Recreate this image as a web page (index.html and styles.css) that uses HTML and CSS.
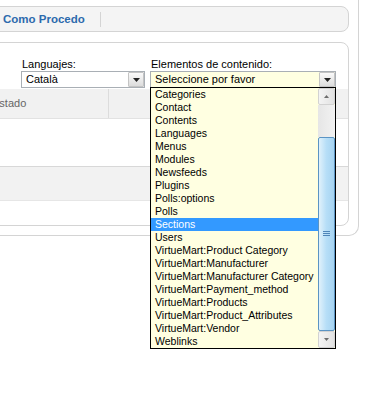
FILE: index.html
```html
<!DOCTYPE html>
<html lang="es">
<head>
  <meta charset="UTF-8" />
  <meta name="viewport" content="width=device-width, initial-scale=1.0" />
  <title>Como Procedo</title>
  <link rel="stylesheet" href="styles.css">
</head>
<body>
  <div class="page">
    <div class="tabs">
      <a class="tab" href="#">Como Procedo</a>
      <span class="tab-sep"></span>
    </div>

    <div class="panel">
      <div class="filters">
        <div class="field field-lang">
          <label>Languajes:</label>
          <div class="combo">
            <span class="combo-value">Català</span>
            <span class="combo-btn">
              <svg width="7" height="4" viewBox="0 0 7 4"><polygon points="0,0 7,0 3.5,4" fill="#222"/></svg>
            </span>
          </div>
        </div>

        <div class="field field-elem">
          <label>Elementos de contenido:</label>
          <div class="combo combo-open">
            <span class="combo-value">Seleccione por favor</span>
            <span class="combo-btn">
              <svg width="7" height="4" viewBox="0 0 7 4"><polygon points="0,0 7,0 3.5,4" fill="#222"/></svg>
            </span>

            <div class="listbox">
              <ul class="options">
                <li>Categories</li>
                <li>Contact</li>
                <li>Contents</li>
                <li>Languages</li>
                <li>Menus</li>
                <li>Modules</li>
                <li>Newsfeeds</li>
                <li>Plugins</li>
                <li>Polls:options</li>
                <li>Polls</li>
                <li class="selected">Sections</li>
                <li>Users</li>
                <li>VirtueMart:Product Category</li>
                <li>VirtueMart:Manufacturer</li>
                <li>VirtueMart:Manufacturer Category</li>
                <li>VirtueMart:Payment_method</li>
                <li>VirtueMart:Products</li>
                <li>VirtueMart:Product_Attributes</li>
                <li>VirtueMart:Vendor</li>
                <li>Weblinks</li>
              </ul>
              <div class="scrollbar">
                <div class="sb-btn">
                  <svg width="5" height="3" viewBox="0 0 5 3"><polygon points="0,3 5,3 2.5,0" fill="#6d6d6d"/></svg>
                </div>
                <div class="sb-track"></div>
                <div class="sb-thumb">
                  <svg width="7" height="6" viewBox="0 0 7 6"><path d="M0 0.5H7M0 2.5H7M0 4.5H7" stroke="#4f85b8" stroke-width="1"/></svg>
                </div>
                <div class="sb-btn">
                  <svg width="5" height="3" viewBox="0 0 5 3"><polygon points="0,0 5,0 2.5,3" fill="#6d6d6d"/></svg>
                </div>
              </div>
            </div>
          </div>
        </div>
      </div>

      <table class="grid">
        <thead>
          <tr><th class="col-state">Estado</th><th></th></tr>
        </thead>
        <tbody>
          <tr class="row-a"><td></td><td></td></tr>
          <tr class="row-b"><td></td><td></td></tr>
        </tbody>
      </table>
    </div>
  </div>
</body>
</html>
```

FILE: styles.css
```css
:root {
  --line: #d4d4d4;
  --link: #2c6aad;
  --focus-bg: #ffffe1;
  --combo-border: #a9afb5;
}

* {
  box-sizing: border-box;
}

html,
body {
  min-height: 394px;
}

body {
  margin: 0;
  background: #fff;
  color: #000;
  font-family: "Liberation Sans", Arial, sans-serif;
  font-size: 11px;
}

/* outer frame, its left part runs off screen */
.page {
  margin-left: -40px;
  width: 399px;
  height: 236px;
  padding-top: 6px;
  border-right: 1px solid var(--line);
  border-bottom: 1px solid var(--line);
  border-bottom-right-radius: 10px;
}

.tabs {
  display: flex;
  align-items: center;
  width: 389px;
  height: 26px;
  border: 1px solid var(--line);
  border-radius: 8px;
  background: #f4f4f4;
}

.tab {
  display: block;
  width: 139px;
  padding-left: 42px;
  color: var(--link);
  font-size: 11.5px;
  font-weight: bold;
  text-decoration: none;
}

.tab-sep {
  width: 1px;
  height: 15px;
  background: var(--line);
}

.panel {
  margin-top: 10px;
  width: 389px;
  height: 184px;
  border: 1px solid var(--line);
  border-radius: 8px;
}

.filters {
  display: flex;
  gap: 5px;
  padding: 14px 0 0 60px;
}

.field label {
  display: block;
  line-height: 14px;
  padding-left: 1px;
}

.field-lang {
  width: 124px;
}

.field-elem {
  width: 186px;
}

.combo {
  position: relative;
  display: flex;
  align-items: center;
  height: 17px;
  border: 1px solid var(--combo-border);
  background: #fff;
}

.combo-open {
  background: var(--focus-bg);
}

.combo-value {
  flex: 1;
  padding-left: 4px;
  line-height: 15px;
  white-space: nowrap;
}

.combo-btn {
  display: flex;
  align-items: center;
  justify-content: center;
  width: 16px;
  height: 15px;
  border: 1px solid #c4c4c4;
  border-radius: 1px;
  background: linear-gradient(#fafafa, #dcdcdc);
}

/* open drop-down list, lies over the grid */
.listbox {
  position: absolute;
  top: 15px;
  left: -1px;
  width: 186px;
  height: 262px;
  display: flex;
  border: 1px solid #000;
  background: var(--focus-bg);
  z-index: 2;
}

.options {
  flex: 1;
  margin: 0;
  padding: 0;
  list-style: none;
  font-size: 10.5px;
}

.options li {
  height: 13px;
  line-height: 13px;
  padding-left: 4px;
  white-space: nowrap;
}

.options li.selected {
  background: #3399ff;
  color: #fff;
}

.scrollbar {
  display: flex;
  flex-direction: column;
  width: 17px;
}

.sb-btn {
  display: flex;
  align-items: center;
  justify-content: center;
  height: 17px;
  border: 1px solid #d2d2d2;
  border-radius: 2px;
  background: linear-gradient(90deg, #f4f4f4, #e2e2e2);
}

.sb-track {
  height: 32px;
  background: linear-gradient(90deg, #e6e6e6, #f2f2f2);
}

.sb-thumb {
  display: flex;
  align-items: center;
  justify-content: center;
  height: 194px;
  border: 1px solid #5b94c4;
  border-radius: 2px;
  background: linear-gradient(90deg, #e0f1fb, #b6def7 50%, #a6d3f1);
}

.grid {
  width: 100%;
  margin-top: 1px;
  border-collapse: collapse;
}

.grid th {
  height: 29px;
  background: #f1f1f1;
  border-bottom: 1px solid #e2e2e2;
  color: #666;
  font-weight: normal;
  text-align: left;
}

.grid th.col-state {
  width: 147px;
  padding-left: 31px;
  border-right: 1px solid #dcdcdc;
}

.row-a td {
  height: 48px;
}

.row-b td {
  height: 34px;
  background: #f2f2f2;
  border-top: 1px solid #d8d8d8;
  border-bottom: 1px solid #e6e6e6;
}
```
